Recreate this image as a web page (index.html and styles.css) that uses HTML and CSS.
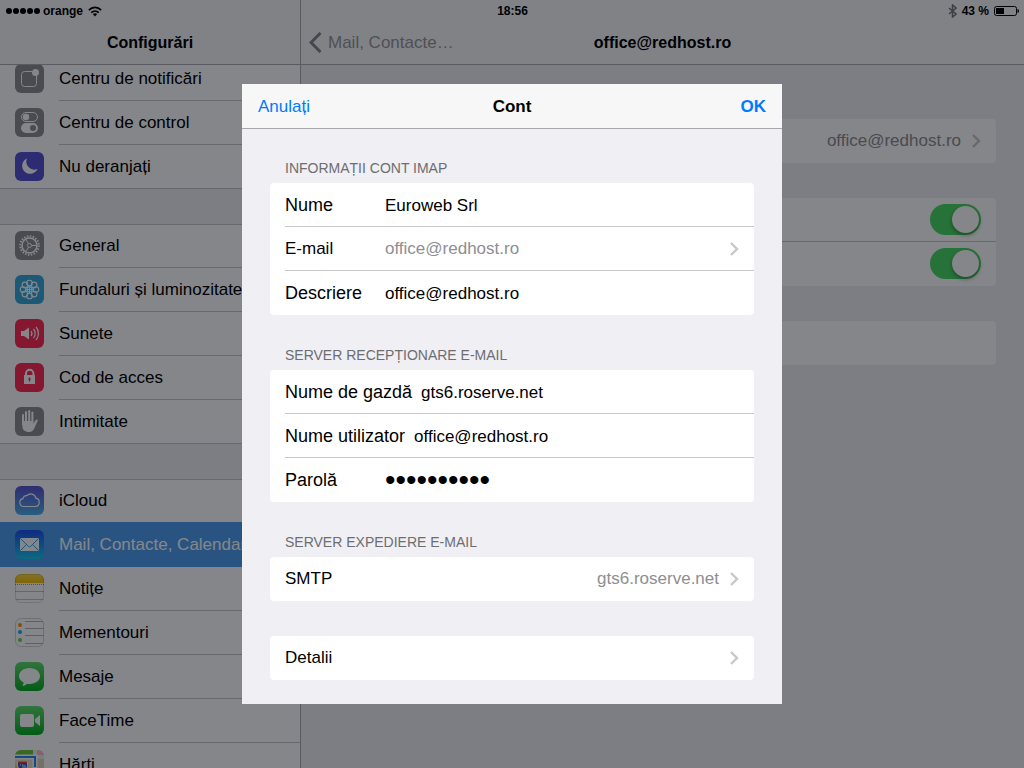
FILE: index.html
```html
<!DOCTYPE html>
<html lang="ro">
<head>
<meta charset="utf-8">
<meta name="viewport" content="width=device-width, initial-scale=1">
<title>Cont</title>
<link rel="stylesheet" href="styles.css">
</head>
<body>
<svg class="defs" aria-hidden="true">
  <defs>
    <linearGradient id="g-cloud" x1="0" y1="0" x2="0" y2="1"><stop offset="0" stop-color="#5b53cf"/><stop offset="1" stop-color="#4fb2ee"/></linearGradient>
    <linearGradient id="g-mail" x1="0" y1="0" x2="0" y2="1"><stop offset="0" stop-color="#1e51ee"/><stop offset="1" stop-color="#1ac8ee"/></linearGradient>
    <linearGradient id="g-green" x1="0" y1="0" x2="0" y2="1"><stop offset="0" stop-color="#5fdd70"/><stop offset="1" stop-color="#07ae22"/></linearGradient>
    <linearGradient id="g-notes" x1="0" y1="0" x2="0" y2="1"><stop offset="0" stop-color="#fbdb4a"/><stop offset="1" stop-color="#f5c000"/></linearGradient>
    <clipPath id="tile"><rect width="29" height="29" rx="6"/></clipPath>
  </defs>
</svg>

<div class="app">
  <div class="status">
    <div class="status-side">
      <svg width="35" height="8" viewBox="0 0 35 8" aria-hidden="true"><circle cx="3" cy="4" r="3"/><circle cx="10" cy="4" r="3"/><circle cx="17" cy="4" r="3"/><circle cx="24" cy="4" r="3"/><circle cx="31" cy="4" r="3"/></svg>
      <span class="carrier">orange</span>
      <svg width="14" height="11" viewBox="0 0 14 11" fill="none" stroke="#000" stroke-width="1.7" aria-hidden="true"><path d="M.8 4.2C4.4.5 9.6.5 13.2 4.2M3.2 6.7C5.4 4.6 8.6 4.6 10.8 6.7"/><path d="M7 7.200c-.9 0-1.600.3-2.200.8L7 10.500l2.200-2.500c-.6-.5-1.300-.8-2.200-.8z" fill="#000" stroke="none"/></svg>
    </div>
    <span>18:56</span>
    <div class="status-side end">
      <svg width="9" height="14" viewBox="0 0 9 14" fill="none" stroke="#77777b" stroke-width="1.5" aria-hidden="true"><path d="M1 4l7 6-3.500 3V1L8 4 1 10"/></svg>
      <span>43 %</span>
      <svg width="25" height="10" viewBox="0 0 25 10" aria-hidden="true"><rect x=".5" y=".5" width="22" height="9" rx="2" fill="none" stroke="#000"/><rect x="2" y="2" width="8" height="6"/><path d="M23.500 3v4c2-.6 2-3.400 0-4z"/></svg>
    </div>
  </div>

  <aside class="sidebar">
    <header class="nav"><h1>Configurări</h1></header>
    <nav class="list">
      <ul class="menu">
        <li><a href="#notificari"><svg viewBox="0 0 29 29"><rect width="29" height="29" rx="6" fill="#8e8e93"/><path d="M17 7.500H9.500a3 3 0 0 0-3 3v9a3 3 0 0 0 3 3h9a3 3 0 0 0 3-3V12" fill="none" stroke="#fff"/><circle cx="20.500" cy="8.500" r="3.500" fill="#fff"/></svg><span>Centru de notificări</span></a></li>
        <li><a href="#control"><svg viewBox="0 0 29 29"><rect width="29" height="29" rx="6" fill="#8e8e93"/><rect x="6.500" y="4.500" width="16" height="9" rx="4.500" fill="none" stroke="#fff"/><circle cx="11" cy="9" r="3.200" fill="#fff"/><rect x="6" y="15" width="17" height="10" rx="5" fill="#fff"/><circle cx="18" cy="20" r="3" fill="#8e8e93"/></svg><span>Centru de control</span></a></li>
        <li><a href="#deranj"><svg viewBox="0 0 29 29"><rect width="29" height="29" rx="6" fill="#5654d4"/><path d="M12 6.500A8 8 0 1 0 22.500 17 8 8 0 0 1 12 6.500z" fill="#fff"/></svg><span>Nu deranjați</span></a></li>
      </ul>
      <ul class="menu">
        <li><a href="#general"><svg viewBox="0 0 29 29" fill="none" stroke="#fff"><rect width="29" height="29" rx="6" fill="#8e8e93" stroke="none"/><circle cx="14.500" cy="14.500" r="9.300" stroke-width="2" stroke-dasharray="1.500 1.422"/><circle cx="14.500" cy="14.500" r="7.500" stroke-width="1.500"/><circle cx="14.500" cy="14.500" r="2"/><path d="M16.500 14.500h5M13.500 12.800l-2.500-4.300M13.500 16.200L11 20.500"/></svg><span>General</span></a></li>
        <li><a href="#fundal"><svg viewBox="0 0 29 29" fill="none" stroke="#fff" stroke-width="1.100"><rect width="29" height="29" rx="6" fill="#36aadc" stroke="none"/><circle cx="14.500" cy="8" r="2.800"/><circle cx="19.100" cy="9.900" r="2.800"/><circle cx="21" cy="14.500" r="2.800"/><circle cx="19.100" cy="19.100" r="2.800"/><circle cx="14.500" cy="21" r="2.800"/><circle cx="9.900" cy="19.100" r="2.800"/><circle cx="8" cy="14.500" r="2.800"/><circle cx="9.900" cy="9.900" r="2.800"/><circle cx="14.500" cy="14.500" r="2.500"/><path d="M14.500 11v7M11 14.500h7"/></svg><span>Fundaluri și luminozitate</span></a></li>
        <li><a href="#sunete"><svg viewBox="0 0 29 29" fill="none" stroke="#fff"><rect width="29" height="29" rx="6" fill="#ff2d55" stroke="none"/><path d="M6 12h3l5-3.500v12L9 17H6z" fill="#fff" stroke="none"/><path d="M16 12c1.200 1.500 1.200 3.500 0 5M18.500 10c2.200 2.500 2.200 6.500 0 9M21 8c3.200 3.500 3.200 9.500 0 13" stroke-width="1.200"/></svg><span>Sunete</span></a></li>
        <li><a href="#cod"><svg viewBox="0 0 29 29"><rect width="29" height="29" rx="6" fill="#ff2d55"/><path d="M11 14v-3.500a3.700 3.700 0 0 1 7.400 0V14" fill="none" stroke="#fff" stroke-width="2"/><rect x="9" y="12" width="11" height="9" fill="#fff"/><path d="M14.500 14.500v4M13.200 16h2.600" stroke="#ff2d55" stroke-width="1.200"/></svg><span>Cod de acces</span></a></li>
        <li><a href="#intim"><svg viewBox="0 0 29 29"><rect width="29" height="29" rx="6" fill="#8e8e93"/><path d="M8 8v9M11 5v11M14.200 4v12M17.400 5.500V16" stroke="#fff" stroke-width="2" stroke-linecap="round"/><path d="M7 14h11.400v3l2-3.500c.8-1.200 2.600-1.200 2.500-.2L19.500 21c-1.200 2.600-2.500 4-5.500 4s-6-1.500-6.500-4.500z" fill="#fff"/></svg><span>Intimitate</span></a></li>
      </ul>
      <ul class="menu">
        <li><a href="#icloud"><svg viewBox="0 0 29 29"><rect width="29" height="29" rx="6" fill="url(#g-cloud)"/><path d="M8.500 20.500a4 4 0 0 1-.5-7.900 3.300 3.300 0 0 1 4-2.900 5 5 0 0 1 8.800 2.500 4.200 4.200 0 0 1-.3 8.300z" fill="none" stroke="#fff" stroke-width="1.200"/></svg><span>iCloud</span></a></li>
        <li class="selected"><a href="#mail" aria-current="page"><svg viewBox="0 0 29 29"><rect width="29" height="29" rx="6" fill="url(#g-mail)"/><rect x="5" y="8" width="19" height="13" rx="1" fill="#fff"/><path d="M5.500 8.500l8 8q1 .8 2 0l8-8M5.500 20.500l6-6M23.500 20.500l-6-6" fill="none" stroke="#1a9bee" stroke-width=".9"/></svg><span>Mail, Contacte, Calendare</span></a></li>
        <li><a href="#notite"><svg viewBox="0 0 29 29"><g clip-path="url(#tile)"><rect width="29" height="29" fill="#fff"/><rect width="29" height="9" fill="url(#g-notes)"/><path d="M0 10.500h29" stroke="#999" stroke-dasharray="1 1"/><path d="M0 17.500h29M0 25.500h29" stroke="#c4c4c4"/></g><rect x=".5" y=".5" width="28" height="28" rx="5.500" fill="none" stroke="#000" stroke-opacity=".14"/></svg><span>Notițe</span></a></li>
        <li><a href="#mementouri"><svg viewBox="0 0 29 29"><rect x=".5" y=".5" width="28" height="28" rx="5.500" fill="#fff" stroke="#d4d4d6"/><path d="M10 3.500h18M10 10.500h19M10 17.500h19M10 25.500h18" stroke="#b4b4b4"/><circle cx="5" cy="7" r="2" fill="#ff9500"/><circle cx="5" cy="14" r="2" fill="#1badf8"/><circle cx="5" cy="22" r="2" fill="#63da38"/></svg><span>Mementouri</span></a></li>
        <li><a href="#mesaje"><svg viewBox="0 0 29 29"><rect width="29" height="29" rx="6" fill="url(#g-green)"/><path d="M14.500 6C8.700 6 4 9.600 4 14c0 2.800 1.800 5.200 4.700 6.600-.1 1.300-.6 2.500-1.300 3.400 2-.3 3.500-1.200 4.600-2.300 6.700 1.200 13-2.500 13-7.700C25 9.600 20.300 6 14.500 6z" fill="#fff"/></svg><span>Mesaje</span></a></li>
        <li><a href="#facetime"><svg viewBox="0 0 29 29"><rect width="29" height="29" rx="6" fill="url(#g-green)"/><rect x="5" y="8" width="14" height="13" rx="2" fill="#fff"/><path d="M20 13l5-4v11l-5-4z" fill="#fff"/></svg><span>FaceTime</span></a></li>
        <li><a href="#harti"><svg viewBox="0 0 29 29"><g clip-path="url(#tile)"><rect width="29" height="29" fill="#e9dfc6"/><path d="M0 0h18v5H0z" fill="#6cc83c"/><path d="M18 0h11v29h-7V5h-4z" fill="#eee"/><path d="M22 0h7v5h-7z" fill="#f7bcc5"/><path d="M22 9h7v20h-7z" fill="#dfd5c0"/><path d="M0 7h20v22" fill="none" stroke="#fff" stroke-width="5"/><path d="M0 7h20v10" fill="none" stroke="#2f86f6" stroke-width="2"/><path d="M0 14l5 7v8H0z" fill="#ffd21f"/><path d="M2.500 11.500h10v4c0 4-3.500 5-5 6-1.500-1-6-3-5-10z" fill="#2b5ed0" stroke="#fff"/><path d="M3 11.500h9v2H3z" fill="#e23b35"/><path d="M5 15h1M7 15h1v3M10 15v3" stroke="#fff"/></g></svg><span>Hărți</span></a></li>
      </ul>
    </nav>
  </aside>

  <main class="detail">
    <header class="nav">
      <button class="back" type="button" disabled><svg width="13" height="21" viewBox="0 0 13 21" fill="none" stroke="#86868b" stroke-width="3" aria-hidden="true"><path d="M11.500 1L2 10.500l9.500 9.500"/></svg><span>Mail, Contacte…</span></button>
      <h2>office@redhost.ro</h2>
      <span></span>
    </header>
    <div class="detail-body">
      <section class="card"><div class="row end"><span class="value">office@redhost.ro</span><svg class="chevron" viewBox="0 0 9 14"><path d="M1 1l6 6-6 6"/></svg></div></section>
      <section class="card">
        <div class="row end toggle"><input class="switch" type="checkbox" aria-label="Mail" checked></div>
        <div class="row end toggle"><input class="switch" type="checkbox" aria-label="Notițe" checked></div>
      </section>
      <section class="card"><div class="row"></div></section>
    </div>
  </main>
</div>

<div class="backdrop">
  <form class="dialog" role="dialog" aria-labelledby="dialog-title">
    <header class="dialog-nav">
      <button class="link" type="button">Anulați</button>
      <h2 id="dialog-title">Cont</h2>
      <button class="link strong" type="button">OK</button>
    </header>
    <div class="dialog-body">
      <section>
        <h3>Informații cont IMAP</h3>
        <div class="card">
          <div class="row"><label for="nume">Nume</label><input id="nume" type="text" value="Euroweb Srl"></div>
          <button class="row" type="button"><span class="label">E-mail</span><span class="value fill">office@redhost.ro</span><svg class="chevron" viewBox="0 0 9 14"><path d="M1 1l6 6-6 6"/></svg></button>
          <div class="row"><label for="descriere">Descriere</label><input id="descriere" type="text" value="office@redhost.ro"></div>
        </div>
      </section>
      <section>
        <h3>Server recepționare e-mail</h3>
        <div class="card">
          <div class="row"><label for="gazda">Nume de gazdă</label><input id="gazda" type="text" value="gts6.roserve.net"></div>
          <div class="row"><label for="utilizator">Nume utilizator</label><input id="utilizator" type="text" value="office@redhost.ro"></div>
          <div class="row"><label for="parola">Parolă</label><input id="parola" type="password" value="parola1234"></div>
        </div>
      </section>
      <section>
        <h3>Server expediere e-mail</h3>
        <div class="card">
          <button class="row" type="button"><span class="label">SMTP</span><span class="value fill right">gts6.roserve.net</span><svg class="chevron" viewBox="0 0 9 14"><path d="M1 1l6 6-6 6"/></svg></button>
        </div>
      </section>
      <section class="plain">
        <div class="card">
          <button class="row" type="button"><span class="label fill">Detalii</span><svg class="chevron" viewBox="0 0 9 14"><path d="M1 1l6 6-6 6"/></svg></button>
        </div>
      </section>
    </div>
  </form>
</div>
</body>
</html>
```
FILE: styles.css
```css
* { box-sizing: border-box; }
body, h1, h2, h3, ul { margin: 0; padding: 0; }
body, button, input { font-family: "Liberation Sans", Arial, Helvetica, sans-serif; font-size: 17px; color: #000; }
body { line-height: 20px; background: #efeff4; overflow: hidden; }
button { border: 0; padding: 0; background: none; text-align: left; line-height: 20px; }
h1, h2 { font-size: 16px; font-weight: bold; padding-top: 2px; }
.defs { position: absolute; width: 0; height: 0; }

.app { position: relative; display: flex; height: 100vh; overflow: hidden; }

.status { position: absolute; top: 0; left: 0; right: 0; z-index: 3; height: 20px; padding: 2px 5px 0 6px; display: flex; align-items: center; font-size: 12px; font-weight: bold; }
.status-side { flex: 1; display: flex; align-items: center; }
.status-side.end { justify-content: flex-end; gap: 5px; }
.carrier { margin: 0 5px 0 2px; }

.nav { position: relative; z-index: 2; flex: none; height: 65px; padding-top: 20px; background: #f7f7f8; border-bottom: 1px solid #adadb2; display: grid; align-items: center; }

.sidebar { flex: none; width: 301px; border-right: 1px solid #adadb2; display: flex; flex-direction: column; background: #efeff4; }
.sidebar .nav { justify-content: center; }
.list { flex: 1; min-height: 0; display: flex; flex-direction: column; gap: 35px; margin-top: -8px; }
.menu { flex: none; list-style: none; background: #fff; box-shadow: inset 0 1px #c8c7cc, inset 0 -1px #c8c7cc; }
.menu li { height: 44px; position: relative; }
.menu li:not(:last-child)::after { content: ""; position: absolute; left: 59px; right: 0; bottom: 0; height: 1px; background: #c8c7cc; }
.menu a { display: flex; align-items: center; gap: 15px; height: 100%; padding: 0 0 1px 15px; color: #000; text-decoration: none; white-space: nowrap; }
.menu svg { flex: none; width: 29px; height: 29px; }
.menu span { padding-top: 1px; }
.menu .selected { background: #509ff0; box-shadow: 0 -1px #509ff0; }
.menu .selected a { color: #fff; }
.menu li.selected::after { background: #509ff0; }

.detail { flex: 1; min-width: 0; display: flex; flex-direction: column; background: #efeff4; }
.detail .nav { grid-template-columns: 1fr auto 1fr; padding-left: 8px; padding-right: 8px; }
.back { display: flex; align-items: center; gap: 6px; color: #98989d; }
.back span { padding-top: 2px; }
.detail-body { padding: 54px 28px 0; display: flex; flex-direction: column; gap: 35px; }

.card { background: #fff; border-radius: 4px; }
.row { width: 100%; height: 44px; padding-right: 15px; padding-left: 15px; display: flex; align-items: center; gap: 9px; position: relative; }
.row.end { justify-content: flex-end; }
.row.toggle { padding-bottom: 1px; }
.row:not(:last-child)::after { content: ""; position: absolute; left: 15px; right: 0; bottom: 0; height: 1px; background: #c8c7cc; }
.value { color: #8e8e93; }
.chevron { flex: none; width: 9px; height: 14px; margin-left: 2px; fill: none; stroke: #c7c7cc; stroke-width: 2.4; }

.switch { appearance: none; margin: 0; width: 51px; height: 31px; border-radius: 16px; background: #4cd964; padding: 2px; display: flex; justify-content: flex-end; }
.switch::before { content: ""; width: 27px; height: 27px; border-radius: 50%; background: #fff; box-shadow: 0 2px 4px rgba(0, 0, 0, .35); }

.backdrop { position: fixed; inset: 0; z-index: 10; padding-top: 20px; display: flex; align-items: center; justify-content: center; background: rgba(0, 2, 8, .48); }
.dialog { width: 540px; max-width: 100%; background: #efeff4; }
.dialog-nav { height: 45px; padding: 0 16px; display: grid; grid-template-columns: 1fr auto 1fr; align-items: center; background: #f7f7f7; border-bottom: 1px solid #a7a7aa; }
.dialog-nav h2 { font-size: 17px; }
.link { color: #007aff; padding-top: 2px; }
.link.strong { font-weight: bold; text-align: right; }
.dialog-body { padding: 30px 28px 24px; display: flex; flex-direction: column; gap: 31px; }
.dialog-body .plain { padding-top: 4px; }
h3 { padding: 0 15px 6px; font-size: 14px; line-height: 18px; font-weight: normal; text-transform: uppercase; color: #6d6d72; }
label, .label { min-width: 91px; white-space: nowrap; }
label { font-size: 18px; }
.fill { flex: 1; }
.right { text-align: right; }
.row input:not(.switch) { flex: 1; min-width: 0; border: 0; padding: 2px 0 0; background: none; outline: 0; height: 30px; }
.row input[type="password"] { padding-top: 0; font-size: 30px; }
```
